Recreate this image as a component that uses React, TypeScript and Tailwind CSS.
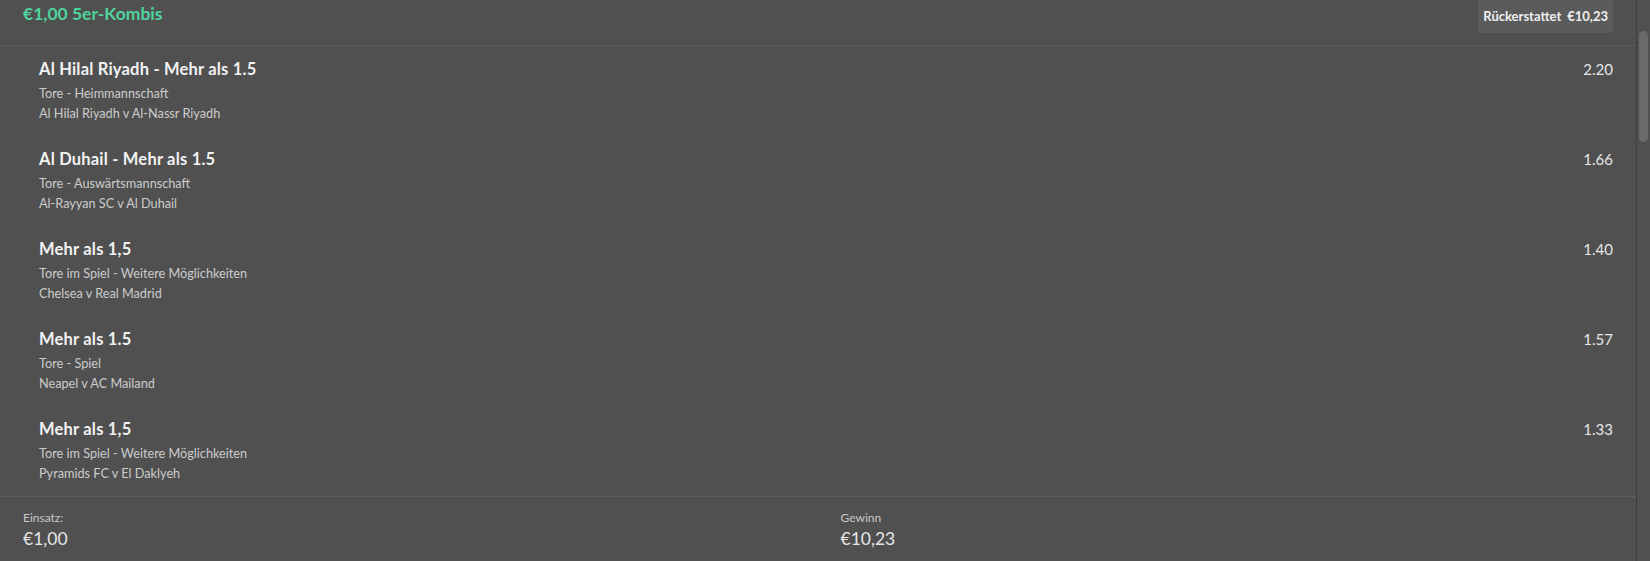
import React from "react";

const items = [
  { title: "Al Hilal Riyadh - Mehr als 1.5", market: "Tore - Heimmannschaft", event: "Al Hilal Riyadh v Al-Nassr Riyadh", odds: "2.20" },
  { title: "Al Duhail - Mehr als 1.5", market: "Tore - Auswärtsmannschaft", event: "Al-Rayyan SC v Al Duhail", odds: "1.66" },
  { title: "Mehr als 1,5", market: "Tore im Spiel - Weitere Möglichkeiten", event: "Chelsea v Real Madrid", odds: "1.40" },
  { title: "Mehr als 1.5", market: "Tore - Spiel", event: "Neapel v AC Mailand", odds: "1.57" },
  { title: "Mehr als 1,5", market: "Tore im Spiel - Weitere Möglichkeiten", event: "Pyramids FC v El Daklyeh", odds: "1.33" },
];

export default function App() {
  return (
    <div className="flex h-[561px] w-full overflow-hidden bg-[#505050] font-['Lato','Noto_Sans',sans-serif]">
      <div className="flex min-w-0 flex-1 flex-col">
        <div className="flex h-[46px] shrink-0 items-start justify-between border-b border-[#5e5e5e] pl-[23px] pr-[23px]">
          <div className="pt-[2px] text-[17.5px] font-bold leading-[24px] text-[#4fd39c]">€1,00 5er-Kombis</div>
          <div className="flex h-[33px] items-center gap-[6px] rounded-b-[3px] bg-[#5b5b5b] px-[5px] text-[13px] font-bold text-[#f0f0f0]">
            <span>Rückerstattet</span>
            <span>€10,23</span>
          </div>
        </div>
        <div className="flex flex-col">
          {items.map((it, i) => (
            <div key={i} className="flex h-[90px] justify-between pl-[39px] pr-[23px] pt-[13px]">
              <div className="flex flex-col">
                <div className="text-[16.5px] font-bold leading-[20px] tracking-[0.2px] text-[#f2f2f2]">{it.title}</div>
                <div className="mt-[4px] text-[12.7px] leading-[20px] text-[#cccccc]">{it.market}</div>
                <div className="text-[12.7px] leading-[20px] text-[#cccccc]">{it.event}</div>
              </div>
              <div className="text-[15px] leading-[20px] text-[#e6e6e6]">{it.odds}</div>
            </div>
          ))}
        </div>
        <div className="grid flex-1 grid-cols-2 border-t border-[#5e5e5e] pl-[23px] pt-[13px]">
          <div className="flex flex-col">
            <span className="text-[12px] leading-[16px] text-[#c8c8c8]">Einsatz:</span>
            <span className="mt-[1px] text-[17.5px] leading-[24px] text-[#e6e6e6]">€1,00</span>
          </div>
          <div className="flex flex-col pl-[11px]">
            <span className="text-[12px] leading-[16px] text-[#c8c8c8]">Gewinn</span>
            <span className="mt-[1px] text-[17.5px] leading-[24px] text-[#e6e6e6]">€10,23</span>
          </div>
        </div>
      </div>
      <div className="flex w-[14px] shrink-0 justify-center border-l border-[#3c3c3c] bg-[#505050] pt-[31px]">
        <div className="h-[111px] w-[9px] rounded-full bg-[#6a6a6a]"></div>
      </div>
    </div>
  );
}
